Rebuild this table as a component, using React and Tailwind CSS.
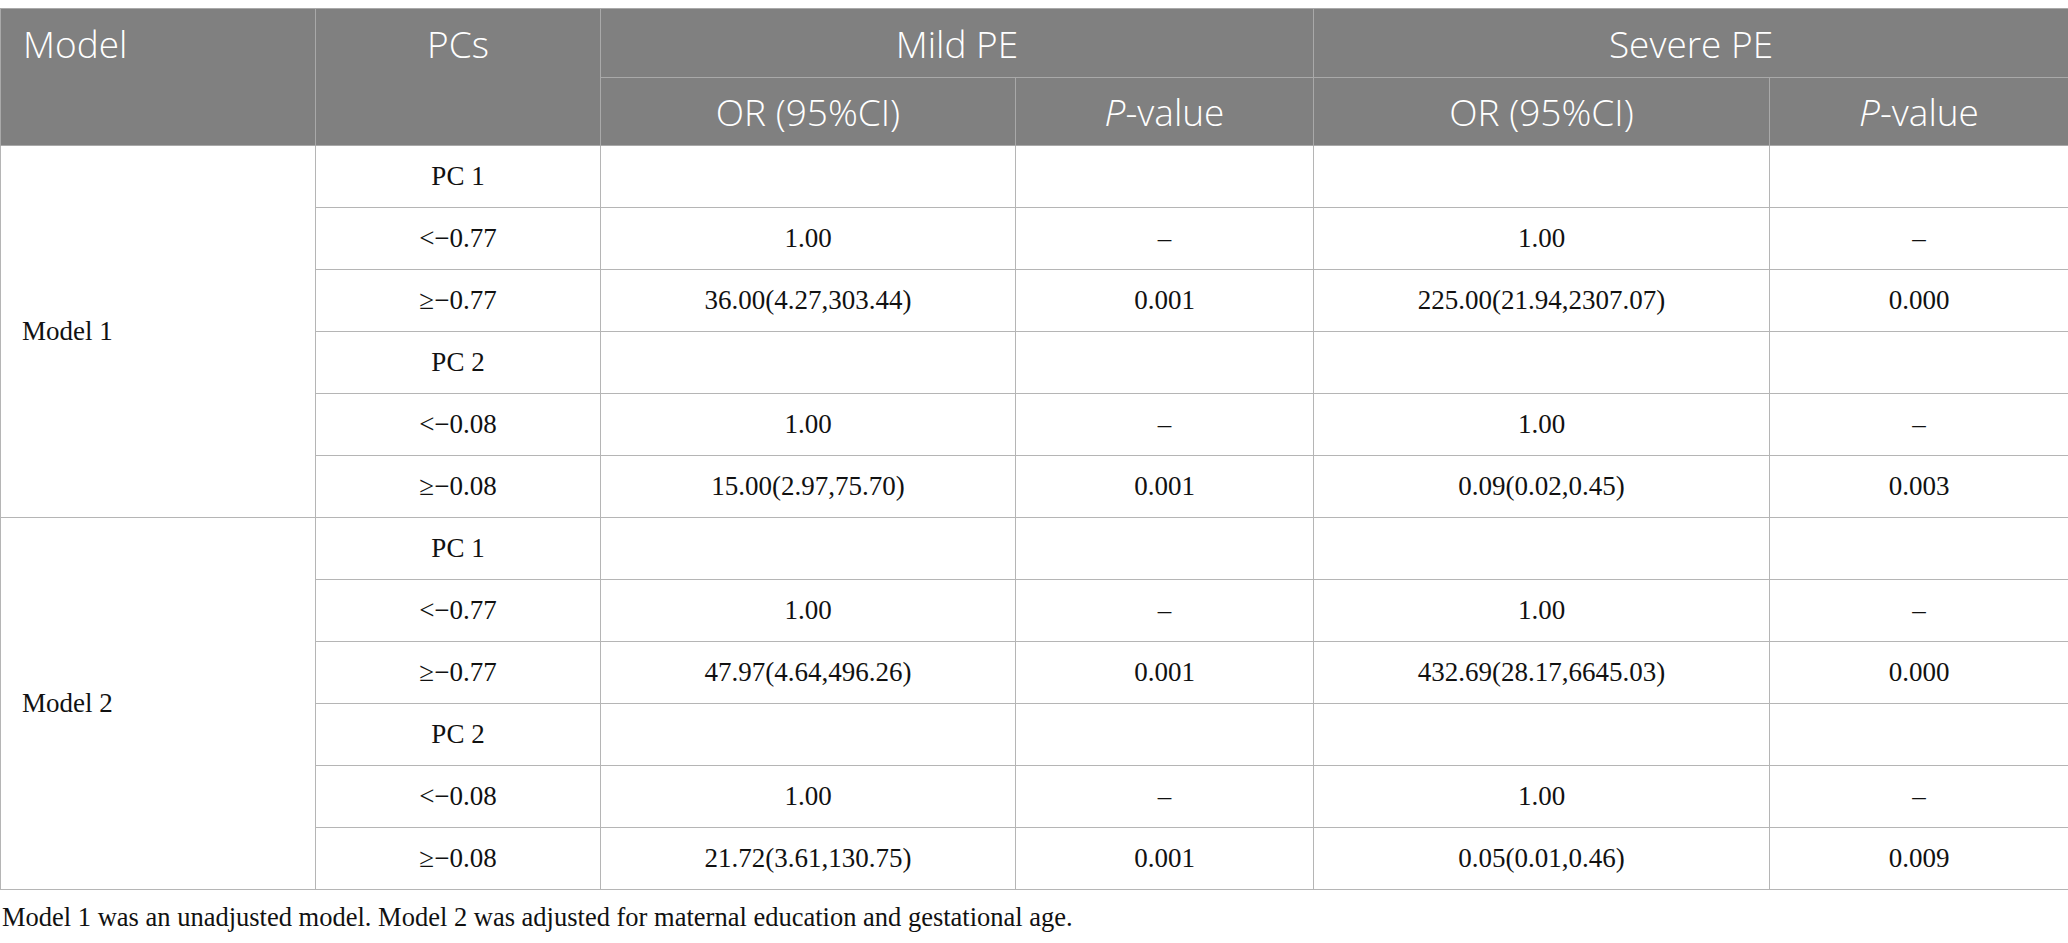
import React from 'react';

/* Ligne d'en-tête : cellules grises, texte blanc */
const head = "bg-[#808080] text-white font-light text-[37px] border border-[#a9a9a9] px-[22px] leading-none";
const cell = "border border-[#b5b5b5] text-center text-[27px] text-[#111] h-[62px] p-0";

const models = [
  {
    name: 'Model 1',
    rows: [
      ['PC 1', '', '', '', ''],
      ['<−0.77', '1.00', '–', '1.00', '–'],
      ['≥−0.77', '36.00(4.27,303.44)', '0.001', '225.00(21.94,2307.07)', '0.000'],
      ['PC 2', '', '', '', ''],
      ['<−0.08', '1.00', '–', '1.00', '–'],
      ['≥−0.08', '15.00(2.97,75.70)', '0.001', '0.09(0.02,0.45)', '0.003'],
    ],
  },
  {
    name: 'Model 2',
    rows: [
      ['PC 1', '', '', '', ''],
      ['<−0.77', '1.00', '–', '1.00', '–'],
      ['≥−0.77', '47.97(4.64,496.26)', '0.001', '432.69(28.17,6645.03)', '0.000'],
      ['PC 2', '', '', '', ''],
      ['<−0.08', '1.00', '–', '1.00', '–'],
      ['≥−0.08', '21.72(3.61,130.75)', '0.001', '0.05(0.01,0.46)', '0.009'],
    ],
  },
];

export default function App() {
  return (
    <div className="w-[2068px] bg-white pt-[8px] font-['Liberation_Serif',serif]">
      <table className="w-[2068px] table-fixed border-collapse">
        <colgroup>
          <col className="w-[315px]" />
          <col className="w-[285px]" />
          <col className="w-[415px]" />
          <col className="w-[298px]" />
          <col className="w-[456px]" />
          <col className="w-[299px]" />
        </colgroup>
        <thead className="font-['Open_Sans',sans-serif]">
          <tr className="h-[69px]">
            <th rowSpan={2} className={`${head} text-left align-top pt-[16px]`}>Model</th>
            <th rowSpan={2} className={`${head} text-center align-top pt-[16px]`}>PCs</th>
            <th colSpan={2} className={`${head} text-center`}>Mild PE</th>
            <th colSpan={2} className={`${head} text-center`}>Severe PE</th>
          </tr>
          <tr className="h-[68px]">
            <th className={`${head} text-center`}>OR (95%CI)</th>
            <th className={`${head} text-center`}><i>P</i>-value</th>
            <th className={`${head} text-center`}>OR (95%CI)</th>
            <th className={`${head} text-center`}><i>P</i>-value</th>
          </tr>
        </thead>
        <tbody>
          {models.map((m) =>
            m.rows.map((r, i) => (
              <tr key={m.name + i}>
                {i === 0 && (
                  <td rowSpan={6} className="border border-[#b5b5b5] text-left text-[27px] text-[#111] px-[21px] align-middle">
                    {m.name}
                  </td>
                )}
                {r.map((v, j) => (
                  <td key={j} className={cell}>{v}</td>
                ))}
              </tr>
            ))
          )}
        </tbody>
      </table>
      <p className="text-[26.5px] text-[#111] pl-[2px] pt-[8px]">
        Model 1 was an unadjusted model. Model 2 was adjusted for maternal education and gestational age.
      </p>
    </div>
  );
}
